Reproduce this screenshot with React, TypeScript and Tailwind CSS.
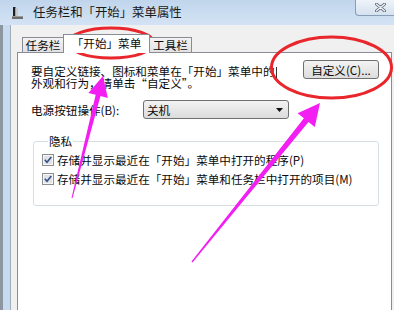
import React from 'react'

function TitleIcon() {
  return (
    <svg width="12" height="12" viewBox="0 0 12 12" className="shrink-0">
      <rect x="1" y="0" width="2.5" height="10" fill="#1d1d1d" />
      <rect x="3.5" y="1" width="2.5" height="9" fill="#c9c9c9" />
      <rect x="0" y="9" width="11" height="3" fill="#6d6d6d" />
      <rect x="0" y="9" width="11" height="1" fill="#9a9a9a" />
    </svg>
  )
}

function CloseGlyph() {
  return (
    <svg width="11" height="9" viewBox="0 0 11 9">
      <path d="M1.5 1.2 L9.5 7.8 M9.5 1.2 L1.5 7.8" stroke="#5f6b7a" strokeWidth="3" strokeLinecap="round" />
      <path d="M1.5 1.2 L9.5 7.8 M9.5 1.2 L1.5 7.8" stroke="#f4f6f9" strokeWidth="1.4" strokeLinecap="round" />
    </svg>
  )
}

function CheckBox() {
  return (
    <svg width="12" height="12" viewBox="0 0 12 12" className="shrink-0">
      <rect x="0.5" y="0.5" width="11" height="11" fill="#f6f6f6" stroke="#8e8f8f" />
      <rect x="2" y="2" width="8" height="8" fill="#dfe3e9" />
      <path d="M2.8 5.8 L5 8.2 L9.3 3.1" fill="none" stroke="#34507f" strokeWidth="1.6" />
    </svg>
  )
}

// red rings and magenta arrows drawn over the dialog
function Annotations() {
  return (
    <svg width="394" height="310" viewBox="0 0 394 310" className="pointer-events-none absolute left-0 top-0">
      <ellipse cx="111" cy="43" rx="43" ry="15" fill="none" stroke="#e8262b" strokeWidth="3" />
      <ellipse cx="331.5" cy="67.5" rx="60" ry="30.5" fill="none" stroke="#e8262b" strokeWidth="3" />
      <line x1="276.5" y1="67" x2="276.5" y2="78" stroke="#333" strokeWidth="1" />
      <polygon
        points="71.5,197.9 95.7,94.8 88.4,92.9 103,76 107.8,97.9 100.5,96 72.5,198.1"
        fill="#f21ef2"
      />
      <polygon
        points="191.5,261.6 303.9,118.2 297.6,113.2 320,103 314.8,127 308.5,122 192.5,262.4"
        fill="#f21ef2"
      />
    </svg>
  )
}

export default function App() {
  return (
    <div className="relative h-[310px] w-[394px] overflow-hidden bg-[#c9dcf1] font-['Noto_Sans_CJK_SC',sans-serif] text-[11.6px] text-[#0a0a0a]">
      {/* title bar */}
      <div className="flex h-[25px] items-start bg-linear-to-b from-[#c0d5ec] to-[#d4e3f4]">
        <div className="ml-[12px] mt-[7px]">
          <TitleIcon />
        </div>
        <span className="ml-[9px] mt-[5px] text-[12.4px] leading-[14px] text-[#1a1a1a]">任务栏和「开始」菜单属性</span>
        <div className="ml-auto flex h-[16px] w-[39px] items-center rounded-bl-[4px] border-b border-l border-[#8a9db6] bg-linear-to-b from-[#eef3f9] to-[#d5e2f0] pl-[19px]">
          <CloseGlyph />
        </div>
      </div>

      {/* body */}
      <div className="flex h-[285px]">
        <div className="w-[10px] border-l-[3px] border-[#8d959f] bg-[#c6daf0]" />
        <div className="flex flex-1 flex-col border-l border-[#a3acb7] bg-[#f0f0f0] pl-[6px] pr-[2px] pt-[9px]">
          {/* tabs */}
          <div className="relative z-10 flex h-[18px] items-end pl-[5px]">
            <div className="flex h-[15px] w-[41px] items-center justify-center border-l border-t border-[#898c95] bg-linear-to-b from-[#f3f3f3] to-[#e2e2e2] leading-[13px]">
              任务栏
            </div>
            <div className="-mb-px flex h-[19px] w-[87px] items-start justify-center border-x border-t border-[#898c95] bg-white pt-[2px] leading-[13px]">
              「开始」菜单
            </div>
            <div className="flex h-[15px] w-[42px] items-center justify-center border-r border-t border-[#898c95] bg-linear-to-b from-[#f3f3f3] to-[#e2e2e2] leading-[13px]">
              工具栏
            </div>
          </div>

          {/* panel */}
          <div className="flex-1 border-x border-t border-[#898c95] bg-white pl-[13px] pr-[12px] pt-[7px]">
            <div className="flex items-start justify-between">
              <div className="mt-[5px] leading-[12px]">
                <div>要自定义链接、图标和菜单在「开始」菜单中的</div>
                <div>外观和行为，请单击“自定义”。</div>
              </div>
              <button className="flex h-[19px] w-[76px] items-center justify-center rounded-[3px] border border-[#707070] bg-linear-to-b from-[#f3f3f3] to-[#dddddd] leading-[12px]">
                自定义(C)...
              </button>
            </div>

            <div className="mt-[11px] flex items-center">
              <span className="w-[112px] leading-[12px]">电源按钮操作(B):</span>
              <div className="flex h-[19px] w-[146px] items-center justify-between rounded-[3px] border border-[#707070] bg-linear-to-b from-[#f3f3f3] to-[#dcdcdc] pl-[3px] pr-[5px]">
                <span className="leading-[12px]">关机</span>
                <svg width="7" height="4" viewBox="0 0 7 4">
                  <path d="M0 0h7L3.5 4z" fill="#111" />
                </svg>
              </div>
            </div>

            <fieldset className="ml-[2px] mt-[16px] rounded-[3px] border border-[#d5dfe5] pb-[17px] pl-[8px] pt-[3px]">
              <legend className="ml-[6px] px-[1px] leading-[12px]">隐私</legend>
              <div className="flex h-[19px] items-center gap-[3px]">
                <CheckBox />
                <span className="leading-[12px]">存储并显示最近在「开始」菜单中打开的程序(P)</span>
              </div>
              <div className="flex h-[19px] items-center gap-[3px]">
                <CheckBox />
                <span className="leading-[12px]">存储并显示最近在「开始」菜单和任务栏中打开的项目(M)</span>
              </div>
            </fieldset>
          </div>
        </div>
      </div>

      <Annotations />
    </div>
  )
}
